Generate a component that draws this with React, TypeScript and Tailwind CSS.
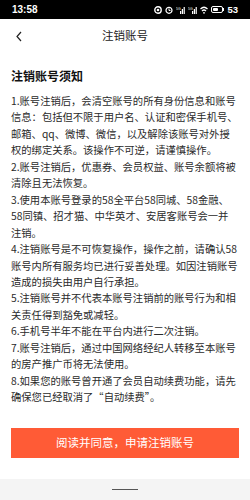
import React from "react";

const lines = [
  "1.账号注销后，会清空账号的所有身份信息和账号",
  "信息：包括但不限于用户名、认证和密保手机号、",
  "邮箱、qq、微博、微信，以及解除该账号对外授",
  "权的绑定关系。该操作不可逆，请谨慎操作。",
  "2.账号注销后，优惠券、会员权益、账号余额将被",
  "清除且无法恢复。",
  "3.使用本账号登录的58全平台58同城、58金融、",
  "58同镇、招才猫、中华英才、安居客账号会一并",
  "注销。",
  "4.注销账号是不可恢复操作，操作之前，请确认58",
  "账号内所有服务均已进行妥善处理。如因注销账号",
  "造成的损失由用户自行承担。",
  "5.注销账号并不代表本账号注销前的账号行为和相",
  "关责任得到豁免或减轻。",
  "6.手机号半年不能在平台内进行二次注销。",
  "7.账号注销后，通过中国网络经纪人转移至本账号",
  "的房产推广币将无法使用。",
  "8.如果您的账号曾开通了会员自动续费功能，请先",
  "确保您已经取消了“自动续费”。",
];

function Signal() {
  return (
    <svg width="9" height="8" viewBox="0 0 9 8">
      <text x="0" y="4" fontSize="3.5" fill="white" fontFamily="Liberation Sans">5G</text>
      <rect x="4" y="5" width="1.2" height="3" fill="white" />
      <rect x="5.8" y="3" width="1.2" height="5" fill="white" />
      <rect x="7.6" y="1" width="1.2" height="7" fill="white" />
    </svg>
  );
}

export default function App() {
  return (
    <div
      className="w-[250px] h-[500px] bg-white flex flex-col overflow-hidden"
      style={{ fontFamily: '"Noto Sans CJK SC", "Noto Sans", sans-serif' }}
    >
      {/* status bar */}
      <div className="h-[19px] bg-black flex items-center justify-between pl-[12px] pr-[12px] shrink-0">
        <span
          className="text-white text-[10px] font-bold leading-none"
          style={{ fontFamily: '"Liberation Sans", Arial, sans-serif' }}
        >
          13:58
        </span>
        <div className="flex items-center gap-[3px]">
          <svg width="8" height="8" viewBox="0 0 8 8">
            <circle cx="4" cy="4" r="3.2" fill="none" stroke="white" strokeWidth="1.4" />
            <circle cx="4" cy="4" r="1.3" fill="white" />
          </svg>
          <svg width="8" height="8" viewBox="0 0 8 8">
            <circle cx="4" cy="4.3" r="3" fill="none" stroke="white" strokeWidth="1.2" />
            <path d="M4 2.5 V4.5 H5.5" stroke="white" strokeWidth="1" fill="none" />
          </svg>
          <Signal />
          <Signal />
          <svg width="8" height="8" viewBox="0 0 8 8">
            <path d="M0.5 3 Q4 -0.5 7.5 3" stroke="white" strokeWidth="1.2" fill="none" />
            <path d="M2 5 Q4 3 6 5" stroke="white" strokeWidth="1.2" fill="none" />
            <circle cx="4" cy="6.8" r="0.9" fill="white" />
          </svg>
          <div className="flex items-center">
            <div className="w-[12px] h-[7px] rounded-[2px] border border-white flex items-center p-[1px]">
              <div className="w-[5px] h-full bg-white rounded-[1px]" />
            </div>
            <div className="w-[1px] h-[3px] bg-white" />
          </div>
          <span
            className="text-white text-[9.5px] font-bold leading-none"
            style={{ fontFamily: '"Liberation Sans", Arial, sans-serif' }}
          >
            53
          </span>
        </div>
      </div>

      {/* header */}
      <div className="h-[34px] relative flex items-center justify-center shrink-0">
        <svg
          className="absolute left-[15px] top-[12px]"
          width="8"
          height="11"
          viewBox="0 0 8 11"
        >
          <polyline points="6,1 2,5.5 6,10" fill="none" stroke="#222" strokeWidth="1.2" />
        </svg>
        <span className="text-[11.5px] text-[#222] leading-none">注销账号</span>
      </div>

      {/* content */}
      <div className="px-[11px] pt-[15px] flex flex-col">
        <div className="text-[12px] font-bold text-[#111] leading-[16px]">注销账号须知</div>
        <div className="mt-[9px] text-[10.3px] leading-[16.45px] text-[#2a2a2a]">
          {lines.map((l, i) => (
            <div key={i} className="whitespace-nowrap">
              {l}
            </div>
          ))}
        </div>
        <button className="mt-[22px] h-[30px] w-full bg-[#ff5b36] text-white text-[11.5px] flex items-center justify-center">
          阅读并同意，申请注销账号
        </button>
      </div>

      <div className="flex-1" />
      <div className="h-[21px] bg-[#f4f4f4] flex items-center justify-center shrink-0">
        <div className="w-[26px] h-[1.5px] bg-[#555]" />
      </div>
    </div>
  );
}
